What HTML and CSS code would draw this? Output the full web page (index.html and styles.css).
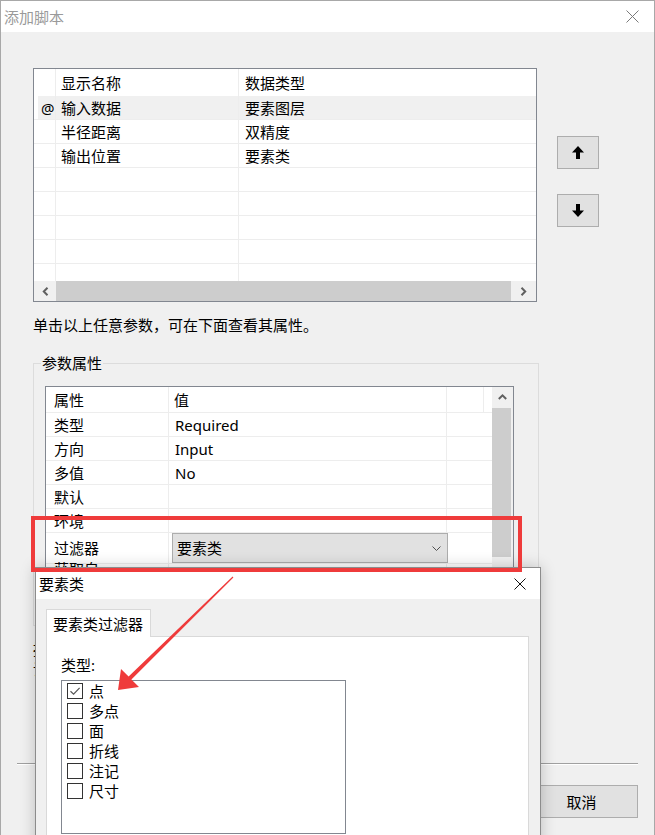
FILE: index.html
```html
<!DOCTYPE html>
<html lang="zh-CN">
<head>
<meta charset="utf-8">
<title>添加脚本</title>
<link rel="stylesheet" href="styles.css">
</head>
<body>
<div class="window">
  <div class="titlebar">
    <span class="title">添加脚本</span>
    <svg class="close" width="13" height="13" viewBox="0 0 13 13"><path d="M0.5 0.5L12.5 12.5M12.5 0.5L0.5 12.5" stroke="#7a7a7a" stroke-width="1" fill="none"/></svg>
  </div>
  <div class="main">
    <div class="top-row">
      <div class="param-list">
        <div class="plist-row plist-head"><div class="c0"></div><div class="c1">显示名称</div><div class="c2">数据类型</div></div>
        <div class="plist-row selected"><div class="c0">@</div><div class="c1">输入数据</div><div class="c2">要素图层</div></div>
        <div class="plist-row"><div class="c0"></div><div class="c1">半径距离</div><div class="c2">双精度</div></div>
        <div class="plist-row"><div class="c0"></div><div class="c1">输出位置</div><div class="c2">要素类</div></div>
        <div class="plist-row"><div class="c0"></div><div class="c1"></div><div class="c2"></div></div>
        <div class="plist-row"><div class="c0"></div><div class="c1"></div><div class="c2"></div></div>
        <div class="plist-row"><div class="c0"></div><div class="c1"></div><div class="c2"></div></div>
        <div class="plist-row"><div class="c0"></div><div class="c1"></div><div class="c2"></div></div>
        <div class="plist-row partial"><div class="c0"></div><div class="c1"></div><div class="c2"></div></div>
        <div class="hscroll">
          <div class="sb-btn"><svg width="7" height="9" viewBox="0 0 7 9"><path d="M5.5 0.8L1.8 4.5L5.5 8.2" stroke="#606060" stroke-width="2" fill="none"/></svg></div>
          <div class="hs-thumb"></div>
          <div class="sb-btn"><svg width="7" height="9" viewBox="0 0 7 9"><path d="M1.5 0.8L5.2 4.5L1.5 8.2" stroke="#606060" stroke-width="2" fill="none"/></svg></div>
        </div>
      </div>
      <div class="move-btns">
        <button class="move-btn"><svg width="12" height="13" viewBox="0 0 12 13"><polygon points="6,0 12,6.5 8,6.5 8,13 4,13 4,6.5 0,6.5" fill="#000"/></svg></button>
        <button class="move-btn"><svg width="12" height="13" viewBox="0 0 12 13"><polygon points="6,13 12,6.5 8,6.5 8,0 4,0 4,6.5 0,6.5" fill="#000"/></svg></button>
      </div>
    </div>

    <p class="hint">单击以上任意参数，可在下面查看其属性。</p>

    <div class="group">
      <div class="group-title">参数属性</div>
      <div class="props">
        <div class="props-grid">
          <div class="prow prow-head"><div class="p1">属性</div><div class="p2">值</div><div></div><div></div></div>
          <div class="prow"><div class="p1">类型</div><div class="p2 val">Required</div><div></div></div>
          <div class="prow"><div class="p1">方向</div><div class="p2 val">Input</div><div></div></div>
          <div class="prow"><div class="p1">多值</div><div class="p2 val">No</div><div></div></div>
          <div class="prow"><div class="p1">默认</div><div class="p2"></div><div></div></div>
          <div class="prow"><div class="p1">环境</div><div class="p2"></div><div></div></div>
          <div class="prow"><div class="p1">过滤器</div><div class="p2 edit">
            <div class="combo"><span>要素类</span><svg width="9" height="5" viewBox="0 0 9 5"><path d="M0.5 0.5L4.5 4.5L8.5 0.5" stroke="#505050" stroke-width="1" fill="none"/></svg></div>
          </div><div></div></div>
          <div class="prow"><div class="p1">获取自</div><div class="p2"></div><div></div></div>
          <div class="prow"><div class="p1">依赖于</div><div class="p2"></div><div></div></div>
        </div>
        <div class="vscroll">
          <div class="vs-btn"><svg width="9" height="6" viewBox="0 0 9 6"><path d="M0.8 5L4.5 1.4L8.2 5" stroke="#606060" stroke-width="2" fill="none"/></svg></div>
          <div class="vs-thumb"></div>
        </div>
      </div>
    </div>

    <div class="desc">
      <div>描述</div>
      <div>说明</div>
    </div>

    <div class="separator"></div>

    <div class="actions">
      <button class="btn">确定</button>
      <button class="btn">取消</button>
    </div>
  </div>
</div>

<div class="popup">
  <div class="popup-title">
    <span>要素类</span>
    <svg width="12" height="12" viewBox="0 0 12 12"><path d="M0.5 0.5L11.5 11.5M11.5 0.5L0.5 11.5" stroke="#111" stroke-width="1" fill="none"/></svg>
  </div>
  <div class="popup-body">
    <div class="tab">要素类过滤器</div>
    <div class="tab-panel">
      <div class="type-label">类型:</div>
      <div class="type-list">
        <div class="type-item"><span class="check"><svg width="14" height="14" viewBox="0 0 14 14"><path d="M2.5 7.2L5.6 10.2L11.6 3.8" stroke="#555" stroke-width="1.2" fill="none"/></svg></span>点</div>
        <div class="type-item"><span class="check"></span>多点</div>
        <div class="type-item"><span class="check"></span>面</div>
        <div class="type-item"><span class="check"></span>折线</div>
        <div class="type-item"><span class="check"></span>注记</div>
        <div class="type-item"><span class="check"></span>尺寸</div>
      </div>
    </div>
  </div>
</div>

<div class="mark-box"></div>
<svg class="mark-arrow" width="655" height="835" viewBox="0 0 655 835">
  <polygon points="118,690 121,669 128.6,676.6 232.6,576.6 233.4,577.4 131.4,679.4 139,687" fill="#ef3b3b"/>
</svg>
</body>
</html>
```

FILE: styles.css
```css
html, body {
  margin: 0;
  padding: 0;
}

body {
  width: 655px;
  height: 835px;
  overflow: hidden;
  position: relative;
  background: #f0f0f0;
  color: #000;
  font-family: "Noto Sans", "Noto Sans CJK SC", sans-serif;
  font-size: 15px;
  line-height: 20px;
}

button {
  font: inherit;
  color: inherit;
  margin: 0;
  padding: 0;
}

/* ---------- main dialog ---------- */
.window {
  height: 835px;
  box-sizing: border-box;
  border: 1px solid #a8a8a8;
  border-bottom: none;
  background: #f0f0f0;
}

.titlebar {
  height: 31px;
  background: #fff;
  display: flex;
  align-items: center;
  justify-content: space-between;
  padding: 0 15px 0 3px;
}

.title {
  color: #9a9a9a;
}

.close {
  display: block;
}

.main {
  padding: 36px 0 0 32px;
}

.top-row {
  display: flex;
  align-items: flex-start;
  gap: 20px;
}

/* parameter list */
.param-list {
  width: 504px;
  height: 234px;
  box-sizing: border-box;
  border: 1px solid #828790;
  background: #fff;
  display: flex;
  flex-direction: column;
}

.plist-row {
  display: grid;
  grid-template-columns: 22px 183px 297px;
  height: 24px;
  flex: none;
}

.plist-row > div {
  box-sizing: border-box;
  border-right: 1px solid #ededed;
  border-bottom: 1px solid #ededed;
  display: flex;
  align-items: center;
  white-space: nowrap;
  overflow: hidden;
}

.plist-row > div:last-child {
  border-right: none;
}

.plist-head {
  height: 27px;
}

.plist-head > div {
  border-bottom: none;
}

.plist-row .c0 {
  padding-left: 7px;
}

.plist-row .c1 {
  padding-left: 5px;
}

.plist-row .c2 {
  padding-left: 6px;
}

.selected > div {
  background: #f0f0f0;
}

.selected > .c0 {
  background: linear-gradient(90deg, #fff 4px, #f0f0f0 4px);
}

.plist-row.partial {
  height: 17px;
}

.plist-row.partial > div {
  border-bottom: none;
}

.hscroll {
  display: grid;
  grid-template-columns: 22px 455px 25px;
  height: 20px;
  background: #f0f0f0;
  flex: none;
}

.sb-btn {
  display: flex;
  align-items: center;
  justify-content: center;
}

.sb-btn svg,
.vs-btn svg,
.move-btn svg {
  display: block;
}

.hs-thumb {
  background: #cdcdcd;
}

/* move up / down */
.move-btns {
  display: flex;
  flex-direction: column;
  gap: 25px;
  margin-top: 68px;
}

.move-btn {
  width: 42px;
  height: 33px;
  box-sizing: border-box;
  border: 1px solid #adadad;
  background: #e1e1e1;
  display: flex;
  align-items: center;
  justify-content: center;
}

.hint {
  margin: 13px 0 0;
  height: 20px;
}

/* parameter properties group */
.group {
  margin-top: 28px;
  width: 506px;
  box-sizing: border-box;
  border: 1px solid #dcdcdc;
  padding-bottom: 9px;
}

.group-title {
  margin: -11px 0 0 7px;
  padding: 0 1px;
  width: fit-content;
  background: #f0f0f0;
}

.props {
  margin: 13px 0 0 11px;
  width: 469px;
  height: 230px;
  box-sizing: border-box;
  border: 1px solid #828790;
  background: #fff;
  display: flex;
  overflow: hidden;
}

.props-grid {
  width: 446px;
  flex: none;
}

.prow {
  display: grid;
  grid-template-columns: 123px 278px 45px;
  height: 24px;
}

.prow-head {
  grid-template-columns: 123px 278px 37px 8px;
  height: 26px;
}

.prow > div {
  box-sizing: border-box;
  border-right: 1px solid #ededed;
  border-bottom: 1px solid #ededed;
  display: flex;
  align-items: center;
  white-space: nowrap;
}

.prow > div:last-child {
  border-right: none;
}

.prow .p1 {
  padding-left: 8px;
}

.prow .p2 {
  padding-left: 5px;
}

.prow .p2.val {
  padding-left: 6px;
}

.prow .p2.edit {
  padding-left: 3px;
  align-items: flex-start;
}

.combo {
  position: relative;
  z-index: 2;
  width: 276px;
  height: 30px;
  flex: none;
  box-sizing: border-box;
  border: 1px solid #adadad;
  background: #e1e1e1;
  display: flex;
  align-items: center;
  justify-content: space-between;
  padding: 0 6px 0 4px;
}

.vscroll {
  width: 21px;
  background: #f0f0f0;
  display: flex;
  flex-direction: column;
}

.vs-btn {
  height: 20px;
  display: flex;
  align-items: center;
  justify-content: center;
}

.vs-thumb {
  margin-top: 1px;
  width: 19px;
  height: 149px;
  background: #cdcdcd;
}

.desc {
  margin-top: 13px;
}

.separator {
  margin: 84px 0 0 -16px;
  width: 621px;
  border-top: 1px solid #a0a0a0;
  border-bottom: 1px solid #fff;
}

.actions {
  margin: 20px 0 0 -16px;
  width: 621px;
  display: flex;
  justify-content: flex-end;
  gap: 10px;
}

.btn {
  width: 113px;
  height: 33px;
  box-sizing: border-box;
  border: 1px solid #adadad;
  background: #e1e1e1;
}

/* ---------- feature class filter dialog ---------- */
.popup {
  position: absolute;
  left: 35px;
  top: 567px;
  width: 506px;
  height: 290px;
  box-sizing: border-box;
  border: 1px solid #8c8c8c;
  background: #f0f0f0;
  box-shadow: 0 0 14px rgba(0, 0, 0, 0.22);
  z-index: 5;
}

.popup-title {
  height: 31px;
  background: #fff;
  display: flex;
  align-items: center;
  justify-content: space-between;
  padding: 0 14px 0 3px;
}

.popup-title svg {
  display: block;
}

.popup-body {
  padding: 10px 11px 0 10px;
}

.tab {
  position: relative;
  z-index: 1;
  width: 105px;
  height: 28px;
  box-sizing: border-box;
  margin-bottom: -1px;
  border: 1px solid #d9d9d9;
  border-bottom: none;
  background: #fff;
  padding-left: 6px;
  display: flex;
  align-items: center;
}

.tab-panel {
  height: 220px;
  border: 1px solid #d9d9d9;
  background: #fff;
  padding: 18px 0 0 14px;
}

.type-label {
  height: 20px;
}

.type-list {
  margin-top: 5px;
  width: 285px;
  height: 154px;
  box-sizing: border-box;
  border: 1px solid #828790;
  padding-left: 5px;
}

.type-item {
  height: 20px;
  display: flex;
  align-items: center;
}

.check {
  width: 16px;
  height: 16px;
  box-sizing: border-box;
  border: 1px solid #333;
  background: #fff;
  margin-right: 6px;
  display: flex;
  align-items: center;
  justify-content: center;
}

.check svg {
  display: block;
}

/* ---------- red callouts ---------- */
.mark-box {
  position: absolute;
  left: 31px;
  top: 516px;
  width: 491px;
  height: 56px;
  box-sizing: border-box;
  border: 4px solid #ef3b3b;
  z-index: 10;
}

.mark-arrow {
  position: absolute;
  left: 0;
  top: 0;
  z-index: 11;
  pointer-events: none;
}
```
